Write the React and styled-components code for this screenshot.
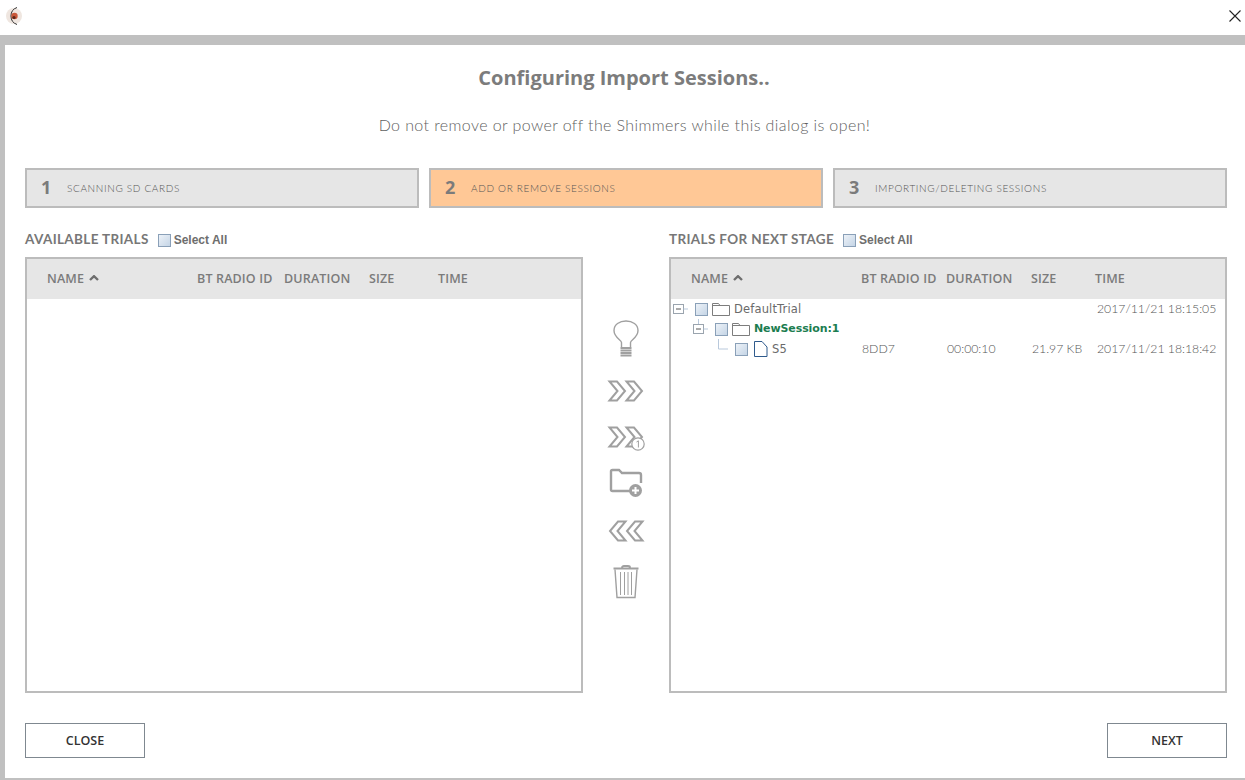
import React from "react";
import styled, { createGlobalStyle } from "styled-components";

const GlobalStyle = createGlobalStyle`
  html, body {
    margin: 0;
    padding: 0;
    background: #fff;
    overflow: hidden;
  }
`;

const Window = styled.div`
  width: 1245px;
  height: 780px;
  display: flex;
  flex-direction: column;
  font-family: "Open Sans", sans-serif;
  color: #7b7b7b;
`;

const TitleBar = styled.div`
  height: 35px;
  flex: none;
  display: flex;
  align-items: flex-start;
  justify-content: space-between;
  padding: 6px 2px 0 5px;
  box-sizing: border-box;
`;

const CloseX = styled.svg`
  width: 14px;
  height: 14px;
  margin: 3px 1px 0 0;
`;

const Dialog = styled.div`
  flex: 1;
  display: flex;
  flex-direction: column;
  border-top: 10px solid #c0c0c0;
  border-left: 5px solid #c0c0c0;
  border-bottom: 2px solid #c0c0c0;
  padding: 0 18px 20px 20px;
  box-sizing: border-box;
`;

const Title = styled.h1`
  margin: 19px 0 0;
  padding-right: 4px;
  height: 28px;
  font-size: 20px;
  line-height: 28px;
  font-weight: 700;
  text-align: center;
  color: #7c7c7c;
`;

const Subtitle = styled.p`
  margin: 22px 0 0;
  padding-right: 3px;
  height: 22px;
  font-family: Lato, sans-serif;
  font-size: 16px;
  line-height: 22px;
  font-weight: 300;
  letter-spacing: 0.4px;
  text-align: center;
  color: #5f5f5f;
`;

const Steps = styled.div`
  margin-top: 32px;
  display: grid;
  grid-template-columns: repeat(3, 394px);
  column-gap: 10px;
`;

const Step = styled.div`
  height: 40px;
  box-sizing: border-box;
  border: 2px solid #bcbcbc;
  background: ${({ $active }) => ($active ? "#ffc896" : "#e6e6e6")};
  display: flex;
  align-items: center;
  padding-left: 14px;
`;

const StepNumber = styled.span`
  width: 26px;
  margin-top: -3px;
  font-size: 18px;
  font-weight: 700;
  color: #7b7b7b;
`;

const StepLabel = styled.span`
  font-family: Lato, sans-serif;
  font-size: 10px;
  font-weight: 300;
  letter-spacing: 0.65px;
  color: #555;
`;

const Columns = styled.div`
  flex: 1;
  margin-top: 22px;
  display: grid;
  grid-template-columns: 558px 86px 558px;
  min-height: 0;
`;

const PanelColumn = styled.section`
  display: flex;
  flex-direction: column;
`;

const PanelHeading = styled.div`
  height: 27px;
  display: flex;
  align-items: flex-start;
`;

const PanelTitle = styled.span`
  font-family: Lato, sans-serif;
  font-size: 13.5px;
  line-height: 18px;
  font-weight: 700;
  letter-spacing: 0.35px;
  color: #777;
  margin-right: 9px;
`;

const SelectAll = styled.label`
  display: flex;
  align-items: center;
  gap: 3px;
  margin-top: 3px;
  font-family: "Liberation Sans", Arial, sans-serif;
  font-size: 12px;
  line-height: 15px;
  font-weight: 700;
  color: #6e6e6e;
`;

const Check = styled.span`
  display: block;
  flex: none;
  width: 11px;
  height: 11px;
  border: 1px solid #8aa0b8;
  background: linear-gradient(135deg, #edf2f8 0%, #c5d5e6 100%);
`;

const Table = styled.div`
  height: 436px;
  box-sizing: border-box;
  border: 2px solid #bcbcbc;
`;

const HeaderRow = styled.div`
  height: 40px;
  box-sizing: border-box;
  padding-bottom: 2px;
  background: #e6e6e6;
  display: grid;
  grid-template-columns: ${({ $cols }) => $cols};
  align-items: center;
  font-size: 12.5px;
  font-weight: 600;
  letter-spacing: 0.15px;
  color: #7b7b7b;
`;

const HeaderCell = styled.span`
  display: flex;
  align-items: center;
  gap: 5px;
  &:first-child {
    padding-left: 20px;
  }
`;

const Row = styled.div`
  height: 20px;
  display: grid;
  grid-template-columns: ${({ $cols }) => $cols};
  align-items: center;
  font-family: Lato, sans-serif;
  font-size: 12.25px;
  font-weight: 300;
  color: #555;
`;

const NameCell = styled.div`
  display: flex;
  align-items: center;
  padding-left: ${({ $indent }) => $indent}px;
`;

const DataCell = styled.span`
  margin-top: -2px;
  padding-left: ${({ $pad }) => $pad || 1}px;
`;

const TreeLines = styled.svg`
  width: 20px;
  height: 20px;
  flex: none;
  margin-right: 4px;
`;

const TreeIcon = styled.svg`
  width: 18px;
  height: 16px;
  flex: none;
  margin: 0 ${({ $after }) => $after}px 0 4px;
`;

const RowName = styled.span`
  font-family: "DejaVu Sans", sans-serif;
  font-size: ${({ $green }) => ($green ? "11px" : "11.5px")};
  font-weight: ${({ $green }) => ($green ? 700 : 400)};
  letter-spacing: ${({ $green }) => ($green ? "-0.1px" : "0.15px")};
  margin-bottom: ${({ $green }) => ($green ? "2px" : "0")};
  color: ${({ $green }) => ($green ? "#1c7d50" : "#6a6a6a")};
`;

const Actions = styled.div`
  display: flex;
  flex-direction: column;
  align-items: center;
  padding-top: 90px;
`;

const ActionIcon = styled.svg`
  display: block;
  flex: none;
  width: 40px;
  height: ${({ $tall }) => ($tall ? 46 : 40)}px;
  margin-bottom: ${({ $after }) => $after}px;
  fill: none;
  stroke: #a0a0a0;
`;

const Footer = styled.div`
  display: flex;
  justify-content: space-between;
`;

const FooterButton = styled.button`
  width: 120px;
  height: 35px;
  padding: 0;
  background: #fff;
  border: 1px solid #7f8890;
  font-family: "Open Sans", sans-serif;
  font-size: 12.5px;
  font-weight: 600;
  color: #333;
`;

const LEFT_COLS = "170px 87px 85px 69px 1fr";
const RIGHT_COLS = "190px 85px 85px 64px 1fr";

const TrialHeader = ({ cols }) => (
  <HeaderRow $cols={cols}>
    <HeaderCell>
      NAME
      <svg width="10" height="6" viewBox="0 0 10 6">
        <path d="M1 5 L5 1.2 L9 5" fill="none" stroke="#6e6e6e" strokeWidth="2.4" />
      </svg>
    </HeaderCell>
    <HeaderCell>BT RADIO ID</HeaderCell>
    <HeaderCell>DURATION</HeaderCell>
    <HeaderCell>SIZE</HeaderCell>
    <HeaderCell>TIME</HeaderCell>
  </HeaderRow>
);

const Expander = ({ up }) => (
  <TreeLines viewBox="0 0 20 20">
    {up && <path d="M7.5 0 V5" stroke="#b9c9dc" />}
    <rect x="2.5" y="5.5" width="10" height="9" fill="#fff" stroke="#9aa4ae" />
    <path d="M5 10 H10" stroke="#555" />
    <path d="M12.5 10 H17" stroke="#b9c9dc" />
  </TreeLines>
);

const FolderIcon = () => (
  <TreeIcon viewBox="0 0 18 16" $after={4}>
    <path
      d="M0.5 14.5 V2.5 H6.5 L8 4.5 H17.5 V14.5 Z M0.5 4.5 H8"
      fill="#fff"
      stroke="#7d7d7d"
    />
  </TreeIcon>
);

const FileIcon = () => (
  <TreeIcon viewBox="0 0 18 16" $after={2}>
    <path d="M2.5 0.5 H10 L15 6 V15.5 H2.5 Z" fill="#fff" stroke="#2f5a8c" />
  </TreeIcon>
);

const Bulb = () => (
  <ActionIcon viewBox="0 0 40 46" $tall $after={5}>
    <path
      d="M15.5 27 V22.5 C15.5 20 8 17.5 8 10.5 C8 4.5 13.5 1 20 1 C26.5 1 32 4.5 32 10.5 C32 17.5 24.5 20 24.5 22.5 V27"
      strokeWidth="1.4"
    />
    <path d="M14.5 28 H25.5 M14.5 30.5 H25.5 M14.5 33 H25.5 M14.5 35.5 H25.5" strokeWidth="2" />
  </ActionIcon>
);

const Chevrons = ({ badge }) => (
  <ActionIcon viewBox="0 0 40 40" $after={6}>
    <path
      d="M3.5 10.5 H11 L19 20 L11 29.5 H3.5 L11.5 20 Z M20.5 10.5 H28 L36 20 L28 29.5 H20.5 L28.5 20 Z"
      strokeWidth="2"
    />
    {badge && (
      <>
        <circle cx="32" cy="27" r="6.2" fill="#fff" strokeWidth="1.2" />
        <path d="M30.5 25 L32.4 23.8 V30.5" strokeWidth="1" />
      </>
    )}
  </ActionIcon>
);

const BackChevrons = () => (
  <ActionIcon viewBox="0 0 40 40" $after={11}>
    <path
      d="M36.5 10.5 H29 L21 20 L29 29.5 H36.5 L28.5 20 Z M19.5 10.5 H12 L4 20 L12 29.5 H19.5 L11.5 20 Z"
      strokeWidth="2"
    />
  </ActionIcon>
);

const AddFolder = () => (
  <ActionIcon viewBox="0 0 40 40" $after={8}>
    <path
      d="M28 28 H6.5 Q5 28 5 26.5 V8.5 Q5 7 6.5 7 H13 L16 10 H33 Q35 10 35 12 V20"
      strokeWidth="2.4"
    />
    <circle cx="29.5" cy="27.5" r="6.5" fill="#a0a0a0" stroke="none" />
    <path d="M29.5 24 V31 M26 27.5 H33" stroke="#fff" strokeWidth="2" />
  </ActionIcon>
);

const Trash = () => (
  <ActionIcon viewBox="0 0 40 40" $after={0}>
    <path d="M7.5 6.5 H32.5 M16 5.5 Q16 4 18 4 H22 Q24 4 24 5.5" strokeWidth="1.8" />
    <path d="M9 7.5 L11 35.5 H29 L31 7.5" strokeWidth="1.4" />
    <path d="M14.5 10 V33 M18.5 10 V33 M22 10 V33 M25.5 10 V33" strokeWidth="1" />
  </ActionIcon>
);

const Logo = () => (
  <svg width="20" height="20" viewBox="0 0 20 20">
    <circle cx="9" cy="10" r="8" fill="#efe6e0" />
    <path d="M12 1.5 A9 9 0 0 0 12 18.5" fill="none" stroke="#333" strokeWidth="1" />
    <circle cx="9.5" cy="10" r="3.2" fill="#c9583a" />
    <circle cx="9" cy="11.5" r="1.6" fill="#5a2518" />
  </svg>
);

const App = () => (
  <Window>
    <GlobalStyle />
    <TitleBar>
      <Logo />
      <CloseX viewBox="0 0 14 14">
        <path d="M1.5 1.5 L12.5 12.5 M12.5 1.5 L1.5 12.5" stroke="#222" strokeWidth="1.1" />
      </CloseX>
    </TitleBar>
    <Dialog>
      <Title>Configuring Import Sessions..</Title>
      <Subtitle>Do not remove or power off the Shimmers while this dialog is open!</Subtitle>
      <Steps>
        <Step>
          <StepNumber>1</StepNumber>
          <StepLabel>SCANNING SD CARDS</StepLabel>
        </Step>
        <Step $active>
          <StepNumber>2</StepNumber>
          <StepLabel>ADD OR REMOVE SESSIONS</StepLabel>
        </Step>
        <Step>
          <StepNumber>3</StepNumber>
          <StepLabel>IMPORTING/DELETING SESSIONS</StepLabel>
        </Step>
      </Steps>
      <Columns>
        <PanelColumn>
          <PanelHeading>
            <PanelTitle>AVAILABLE TRIALS</PanelTitle>
            <SelectAll>
              <Check />
              Select All
            </SelectAll>
          </PanelHeading>
          <Table>
            <TrialHeader cols={LEFT_COLS} />
          </Table>
        </PanelColumn>
        <Actions>
          <Bulb />
          <Chevrons />
          <Chevrons badge />
          <AddFolder />
          <BackChevrons />
          <Trash />
        </Actions>
        <PanelColumn>
          <PanelHeading>
            <PanelTitle>TRIALS FOR NEXT STAGE</PanelTitle>
            <SelectAll>
              <Check />
              Select All
            </SelectAll>
          </PanelHeading>
          <Table>
            <TrialHeader cols={RIGHT_COLS} />
            <Row $cols={RIGHT_COLS}>
              <NameCell $indent={0}>
                <Expander />
                <Check />
                <FolderIcon />
                <RowName>DefaultTrial</RowName>
              </NameCell>
              <span />
              <span />
              <span />
              <DataCell $pad={2}>2017/11/21 18:15:05</DataCell>
            </Row>
            <Row $cols={RIGHT_COLS}>
              <NameCell $indent={20}>
                <Expander up />
                <Check />
                <FolderIcon />
                <RowName $green>NewSession:1</RowName>
              </NameCell>
            </Row>
            <Row $cols={RIGHT_COLS}>
              <NameCell $indent={40}>
                <TreeLines viewBox="0 0 20 20">
                  <path d="M7.5 0 V10 H17" fill="none" stroke="#b9c9dc" />
                </TreeLines>
                <Check />
                <FileIcon />
                <RowName>S5</RowName>
              </NameCell>
              <DataCell>8DD7</DataCell>
              <DataCell>00:00:10</DataCell>
              <DataCell>21.97 KB</DataCell>
              <DataCell $pad={2}>2017/11/21 18:18:42</DataCell>
            </Row>
          </Table>
        </PanelColumn>
      </Columns>
      <Footer>
        <FooterButton>CLOSE</FooterButton>
        <FooterButton>NEXT</FooterButton>
      </Footer>
    </Dialog>
  </Window>
);

export default App;
